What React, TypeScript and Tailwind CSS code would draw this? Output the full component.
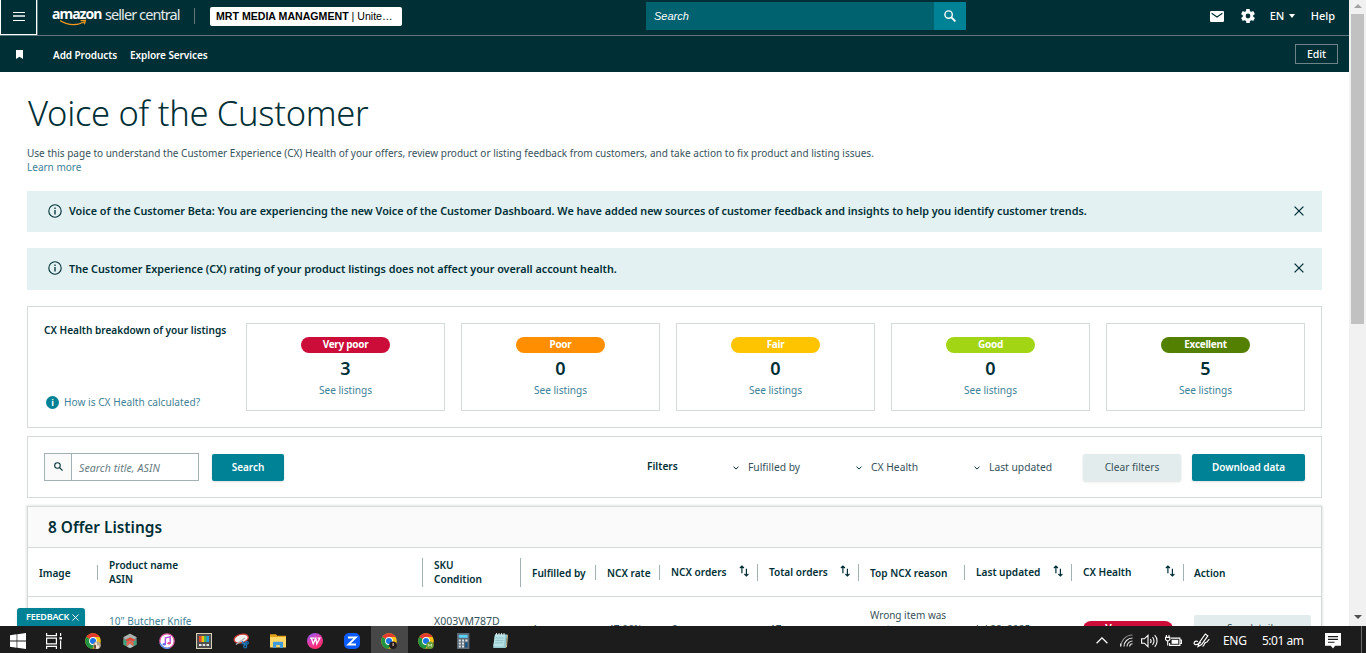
import type { ReactNode } from "react";
import clsx from "clsx";

const HEALTH = [
  { label: "Very poor", count: 3, color: "bg-[#cc0c39]" },
  { label: "Poor", count: 0, color: "bg-[#ff8f00]" },
  { label: "Fair", count: 0, color: "bg-[#ffc400]" },
  { label: "Good", count: 0, color: "bg-[#a2d614]" },
  { label: "Excellent", count: 5, color: "bg-[#538000]" },
];

function Menu() {
  return (
    <div className="flex h-[35px] w-[37px] shrink-0 flex-col items-center gap-[2px] border border-t-0 border-white pt-[12px]">
      <span className="h-px w-3 bg-white" />
      <span className="h-[2px] w-3 bg-[#b9c6c8]" />
      <span className="mt-px h-px w-3 bg-white" />
    </div>
  );
}

function SearchIcon({ className, thick = 1.9 }: { className?: string; thick?: number }) {
  return (
    <svg viewBox="0 0 12 12" className={className} fill="none" stroke="currentColor">
      <circle cx="4.6" cy="4.6" r="3.7" strokeWidth="1.4" />
      <path d="M7.4 7.4 11.4 11.4" strokeWidth={thick} />
    </svg>
  );
}

function Close({ className }: { className?: string }) {
  return (
    <svg viewBox="0 0 10 10" className={className} fill="none" stroke="currentColor" strokeWidth="1.3">
      <path d="M.6.6 9.4 9.4M9.4.6.6 9.4" />
    </svg>
  );
}

function SortIcon() {
  return (
    <svg viewBox="0 0 10 12" className="mb-[2px] h-3 w-[10px] shrink-0 text-[#002f36]" fill="none" stroke="currentColor" strokeWidth="1.2">
      <path d="M2.9 8.3V1M.9 3 2.9 1 4.9 3M7.4 3.7V11M5.4 9 7.4 11 9.4 9" />
    </svg>
  );
}

function Header() {
  return (
    <header className="h-[72px] shrink-0 bg-[#002f36] text-white">
      <div className="flex h-9 border-b border-[#5c777c]">
        <Menu />
        <div className="h-[35px] w-px bg-[#5c777c]" />
        <div className="relative ml-[14px] flex h-[28px] w-[130px] items-center whitespace-nowrap leading-none">
          <span className="w-[53px] text-[14px] font-bold tracking-[-0.95px]">amazon</span>
          <span className="text-[14.5px] tracking-[-0.92px] text-[#e4eaeb]">seller central</span>
          <svg viewBox="0 0 28 8" className="absolute left-[8px] top-[19px] h-2 w-7" fill="none" stroke="#f79a1c" strokeWidth="1.3">
            <path d="M0 1.6Q12 9 24 3M20.6 1.6 25.4 1.4 24.3 5.2" />
          </svg>
        </div>
        <div className="ml-[12px] mt-2 h-4 w-px bg-[#5c777c]" />
        <div className="ml-[15px] mt-[7px] h-[19px] w-[192px] whitespace-nowrap rounded-[2px] bg-white pl-[6px] font-['Liberation_Sans',sans-serif] text-[10.6px] leading-[19px] text-black">
          <b>MRT MEDIA MANAGMENT</b> | Unite…
        </div>
        <div className="ml-[244px] mt-[2px] flex h-7 w-[320px]">
          <div className="flex-1 bg-[#00616f] pl-2 font-['Liberation_Sans',sans-serif] text-[11px] italic leading-7">Search</div>
          <div className="flex w-8 items-center justify-center bg-[#008296]">
            <SearchIcon className="h-3 w-3" />
          </div>
        </div>
        <div className="ml-auto flex h-8 items-center pr-[14px] text-[11px] font-medium">
          <svg viewBox="0 0 14 11" className="h-[11px] w-[14px]">
            <rect width="14" height="11" rx="1.2" fill="#fff" />
            <path d="M1.6 2.2 7 6 12.4 2.2" fill="none" stroke="#002f36" strokeWidth="1.2" />
          </svg>
          <svg viewBox="2 2 20 20" className="ml-[17px] h-[14px] w-[14px]" fill="#fff">
            <path d="M19.4 13c.04-.3.06-.65.06-1s-.02-.7-.07-1l2.1-1.64a.5.5 0 0 0 .12-.64l-2-3.46a.5.5 0 0 0-.6-.22l-2.5 1a7.3 7.3 0 0 0-1.7-.98l-.37-2.65a.5.5 0 0 0-.5-.41h-4a.5.5 0 0 0-.5.41l-.37 2.65a7.3 7.3 0 0 0-1.7.98l-2.48-1a.5.5 0 0 0-.6.22l-2 3.46a.5.5 0 0 0 .12.64L4.6 11a8 8 0 0 0 0 2l-2.1 1.64a.5.5 0 0 0-.13.64l2 3.46c.13.22.38.3.6.22l2.5-1c.52.4 1.08.73 1.7.98l.37 2.65c.04.24.25.41.5.41h4c.25 0 .46-.17.5-.41l.37-2.65a7.3 7.3 0 0 0 1.7-.98l2.49 1c.22.08.47 0 .6-.22l2-3.46a.5.5 0 0 0-.12-.64ZM12 15.4a3.4 3.4 0 1 1 0-6.8 3.4 3.4 0 0 1 0 6.8Z" />
          </svg>
          <span className="ml-[15px] w-[19px]">EN</span>
          <span className="border-x-[3.5px] border-t-[4px] border-x-transparent border-t-white" />
          <span className="ml-[16px]">Help</span>
        </div>
      </div>
      <div className="flex h-9 items-center text-[10px] font-semibold tracking-[-0.08px]">
        <svg viewBox="0 0 7 9" className="ml-4 h-[9px] w-[7px]" fill="#fff">
          <path d="M0 0H7V9L3.5 6.8 0 9Z" />
        </svg>
        <span className="ml-[30px] w-[77px] whitespace-nowrap pt-[2px]">Add Products</span>
        <span className="whitespace-nowrap pt-[2px]">Explore Services</span>
        <div className="ml-auto mr-[11px] flex h-5 w-[43px] items-center justify-center border border-[#6b8589] pt-px text-[10.5px] font-medium">Edit</div>
      </div>
    </header>
  );
}

function Alert({ className, children }: { className?: string; children: ReactNode }) {
  return (
    <div className={clsx("flex items-center bg-[#e3f1f2] pl-[21px] pr-[18px] text-[#002f36]", className)}>
      <svg viewBox="0 0 14 14" className="mb-[2px] h-[14px] w-[14px]" fill="none" stroke="currentColor">
        <circle cx="7" cy="7" r="6.2" strokeWidth="1.1" />
        <path d="M7 6V10.4M7 3.6V5" strokeWidth="1.3" />
      </svg>
      <p className="mb-px ml-[7px] flex-1 whitespace-nowrap text-[10.8px] font-semibold leading-4 tracking-[-0.015px]">{children}</p>
      <Close className="mb-[2px] h-[10px] w-[10px]" />
    </div>
  );
}

function Breakdown() {
  return (
    <section className="mt-4 flex h-[122px] border border-[#d5dbdb] pl-4 pt-4">
      <div className="-mt-px flex h-[88px] w-[202px] flex-col justify-between whitespace-nowrap">
        <h2 className="text-[10.1px] font-semibold leading-4 text-[#002f36]">CX Health breakdown of your listings</h2>
        <div className="flex items-center pl-[2px] text-[10.1px] leading-4 text-[#3f8297]">
          <span className="flex h-[13px] w-[13px] items-center justify-center rounded-full bg-[#008296] text-[9px] font-bold leading-none text-white">i</span>
          <span className="ml-[5px] tracking-[0.03px]">How is CX Health calculated?</span>
        </div>
      </div>
      <div className="flex gap-4">
        {HEALTH.map((h) => (
          <div key={h.label} className="flex h-[88px] w-[199px] flex-col items-center border border-[#d5dbdb] pt-[13px]">
            <span className={clsx("h-4 w-[89px] rounded-full text-center text-[10px] font-bold leading-[15px] tracking-[-0.3px] text-white", h.color)}>{h.label}</span>
            <span className="mt-[3px] text-[18px] font-semibold leading-[24px] text-[#002f36]">{h.count}</span>
            <span className="mt-[2px] text-[10.1px] leading-4 text-[#3f8297]">See listings</span>
          </div>
        ))}
      </div>
    </section>
  );
}

function Filter({ className, children }: { className: string; children: ReactNode }) {
  return (
    <div className={clsx("flex items-center whitespace-nowrap pt-[2px] text-[10.3px] text-[#37525a]", className)}>
      <svg viewBox="0 0 6 4" className="mr-[9px] h-1 w-[6px]" fill="none" stroke="#002f36">
        <path d="M.5.6 3 3.1 5.5.6" />
      </svg>
      {children}
    </div>
  );
}

function Filters() {
  return (
    <section className="mt-2 flex h-[62px] border border-[#d5dbdb] pl-4">
      <div className="mt-4 flex h-7 w-[155px] border border-[#a2b1b3]">
        <div className="flex w-[27px] justify-center border-r border-[#a2b1b3] bg-[#fafafa] pt-2 text-[#002f36]">
          <SearchIcon className="h-[9px] w-[9px]" thick={1.5} />
        </div>
        <span className="pl-[7px] text-[10.5px] italic leading-[28px] tracking-[0.1px] text-[#687d82]">Search title, ASIN</span>
      </div>
      <button className="ml-[13px] mt-[17px] h-[27px] w-[72px] rounded-[2px] bg-[#008296] text-[10px] font-semibold text-white shadow-sm">Search</button>
      <span className="ml-[363px] mt-[21px] w-[86px] text-[10.2px] font-semibold leading-4 text-[#002f36]">Filters</span>
      <Filter className="w-[123px]">Fulfilled by</Filter>
      <Filter className="w-[118px]">CX Health</Filter>
      <Filter className="w-[109px]">Last updated</Filter>
      <button className="mt-[17px] h-[27px] w-[98px] rounded-[2px] bg-[#e3eced] text-[10.2px] text-[#37525a] shadow-sm">Clear filters</button>
      <button className="ml-[11px] mt-[17px] h-[27px] w-[113px] rounded-[2px] bg-[#008296] text-[10px] font-semibold tracking-[-0.05px] text-white shadow-sm">Download data</button>
    </section>
  );
}

type HeadProps = { width: string; bar?: string; tall?: boolean; sort?: boolean; children: ReactNode };

function Head({ width, bar = "h-[15px]", tall, sort, children }: HeadProps) {
  return (
    <div className={clsx("flex shrink-0 items-center whitespace-nowrap", width)}>
      <div className={clsx("flex-1", sort && "pb-px", !sort && !tall && "pt-px")}>{children}</div>
      {sort && <SortIcon />}
      {bar && <span className={clsx("w-px bg-[#a2b1b3]", bar, sort && "ml-[8px]")} />}
    </div>
  );
}

function Listings() {
  return (
    <section className="mt-2 h-[160px] border border-[#d5dbdb] shadow-[0_0_2px_1px_rgba(0,0,0,0.1)]">
      <h2 className="h-[41px] border-b border-[#d5dbdb] bg-[#fafafa] pl-5 text-[15.4px] font-semibold leading-[41px] text-[#002f36]">8 Offer Listings</h2>
      <div className="flex h-[49px] border-b border-[#d5dbdb] pl-[11px] text-[10.1px] font-semibold leading-[14px] text-[#002f36]">
        <Head width="w-[59px]">Image</Head>
        <Head width="w-[325px] pl-[11px]" bar="h-[29px]" tall>Product name<br />ASIN</Head>
        <Head width="w-[98px] pl-[11px]" bar="h-[29px]" tall>SKU<br />Condition</Head>
        <Head width="w-[75px] pl-[11px]">Fulfilled by</Head>
        <Head width="w-[64px] pl-[11px]">NCX rate</Head>
        <Head width="w-[98px] pl-[11px]" bar="h-[17px]" sort>NCX orders</Head>
        <Head width="w-[101px] pl-[11px]" bar="h-[17px]" sort>Total orders</Head>
        <Head width="w-[106px] pl-[11px]">Top NCX reason</Head>
        <Head width="w-[107px] pl-[11px]" bar="h-[17px]" sort>Last updated</Head>
        <Head width="w-[112px] pl-[11px]" bar="h-[17px]" sort>CX Health</Head>
        <Head width="w-[130px] pl-[10px]" bar="">Action</Head>
      </div>
      <div className="flex h-[68px] items-start overflow-hidden whitespace-nowrap text-[10.1px] leading-[14px] text-[#37525a]">
        <span className="ml-[81px] mt-[17px] w-[325px] text-[#3f8297]">10" Butcher Knife</span>
        <span className="mt-[17px] w-[98px] text-[10.5px]">X003VM787D</span>
        <span className="mt-[25px] w-[76px]">Amazon</span>
        <span className="mt-[25px] w-[64px]">47.06%</span>
        <span className="mt-[25px] w-[98px]">8</span>
        <span className="mt-[25px] w-[100px]">17</span>
        <span className="mt-[11px] w-[106px] text-[10px]">Wrong item was<br />sent</span>
        <span className="mt-[25px] w-[107px]">Jul 22, 2025</span>
        <span className="mt-[24px] h-4 w-[90px] rounded-full bg-[#cc0c39] text-center text-[10px] font-bold leading-[15px] tracking-[-0.3px] text-white">Very poor</span>
        <span className="ml-[21px] mt-[18px] h-[27px] w-[117px] rounded-[2px] bg-[#e3eced] text-center leading-[27px]">See details</span>
      </div>
    </section>
  );
}

function Scrollbar() {
  return (
    <div className="flex w-[17px] shrink-0 flex-col items-center bg-[#f1f1f1]">
      <span className="mt-1 border-x-[4px] border-b-[4px] border-x-transparent border-b-[#a3a3a3]" />
      <div className="mt-[6px] h-[310px] w-[13px] bg-[#c1c1c1]" />
      <span className="mb-[7px] mt-auto border-x-[4px] border-t-[4px] border-x-transparent border-t-[#505050]" />
    </div>
  );
}

function Icon({ children }: { children: ReactNode }) {
  return (
    <svg viewBox="0 0 16 16" className="h-4 w-4 shrink-0">
      {children}
    </svg>
  );
}

function Chrome({ children }: { children: ReactNode }) {
  return (
    <Icon>
      <circle cx="8" cy="8" r="7.8" fill="#fbc116" />
      <path d="M8 8 1.3 4A7.8 7.8 0 0 1 14.7 4H8Z" fill="#e33b2e" />
      <path d="M1.3 4A7.8 7.8 0 0 0 7.3 15.8L11 10 8 8Z" fill="#229342" />
      <circle cx="8" cy="8" r="3.9" fill="#fff" />
      <circle cx="8" cy="8" r="3" fill="#1a73e8" />
      {children}
    </Icon>
  );
}

const APPS: { name: string; active?: boolean; icon: ReactNode }[] = [
  {
    name: "chrome",
    icon: (
      <Chrome>
        <circle cx="12" cy="12.2" r="3.8" fill="#b9a692" />
        <path d="M10 9.5h2v3h2.4l-1 3.3h-2.8Z" fill="#f3e4d4" />
        <path d="M9 12h2v3.5H9Z" fill="#6b4c3a" />
      </Chrome>
    ),
  },
  {
    name: "hexagon",
    icon: (
      <Icon>
        <path d="M8 .8 14.6 4.3V11.7L8 15.2 1.4 11.7V4.3Z" fill="#7e8c87" />
        <path d="M8 .8 14.6 4.3 12 6.2 8 4.6 4 6.5 1.4 4.3Z" fill="#a9b4b0" />
        <path d="M4 6.4 8.2 4.4 12.8 6.5 11.8 8.6 8 7 4.6 8.8Z" fill="#e5442f" />
        <path d="M1.5 6.5 4.4 8V13L1.5 11.6Z" fill="#36a878" />
        <path d="M4.6 9 8 7.6 11.4 9.2V13.2L8 10.4 4.6 13.2Z" fill="#e96350" />
        <path d="M4.8 13.4 8 10.8 11.2 13.4 8 15.1Z" fill="#b8c4c0" />
        <path d="M11.8 8.5 14.4 7.3V11.6L11.8 13Z" fill="#3aa57a" />
      </Icon>
    ),
  },
  {
    name: "music",
    icon: (
      <Icon>
        <circle cx="8" cy="8" r="7.2" fill="#fff" stroke="#e0559f" strokeWidth="1.3" />
        <path d="M1 10A7.2 7.2 0 0 0 11 14.6" fill="none" stroke="#4d9df5" strokeWidth="1.3" />
        <path d="M6.4 11.2V4.9L11.2 3.8V10" fill="none" stroke="#b44de0" strokeWidth="1.4" />
        <ellipse cx="5.3" cy="11.3" rx="1.7" ry="1.3" fill="#6b6cf0" />
        <ellipse cx="10.1" cy="10.3" rx="1.7" ry="1.3" fill="#e8478d" />
      </Icon>
    ),
  },
  {
    name: "powertoys",
    icon: (
      <Icon>
        <rect x=".5" y=".5" width="15" height="15" fill="#4e4e4e" stroke="#d8cfb4" />
        <rect x="3" y="3" width="2.5" height="6" fill="#e8452c" />
        <rect x="5.5" y="3" width="2.5" height="6" fill="#fdbb16" />
        <rect x="8" y="3" width="2.5" height="6" fill="#54b948" />
        <rect x="10.5" y="3" width="2.5" height="6" fill="#21a3e8" />
        <path d="M3 11h2.5v2H3Zm3.7 0h2.5v2H6.7Zm3.8 0H13v2h-2.5Z" fill="#e6e6e6" />
      </Icon>
    ),
  },
  {
    name: "snipping",
    icon: (
      <Icon>
        <ellipse cx="8.2" cy="5.6" rx="7.2" ry="4.2" transform="rotate(-15 8 5.6)" fill="#f1eeee" stroke="#d33a34" strokeWidth="1.2" />
        <path d="M3 11.5 12 5" stroke="#b5b5b5" strokeWidth="1.4" />
        <path d="M9 8.2 12 12M13.6 9.7 8.5 11" stroke="#1d7fc8" strokeWidth="1.2" />
        <circle cx="12.2" cy="13.4" r="1.5" fill="none" stroke="#1d7fc8" strokeWidth="1.1" />
        <circle cx="14" cy="9.8" r="1.3" fill="none" stroke="#1d7fc8" strokeWidth="1.1" />
      </Icon>
    ),
  },
  {
    name: "explorer",
    icon: (
      <Icon>
        <path d="M0 1.2h6l1.2 1.6H16v3H0Z" fill="#e5a21c" />
        <rect y="4" width="16" height="10.5" fill="#ffd766" />
        <path d="M3 15V8.8h10V15h-3.2v-3H6.2v3Z" fill="#3f9bdc" />
      </Icon>
    ),
  },
  {
    name: "wps",
    icon: (
      <Icon>
        <defs>
          <linearGradient id="wps" x1="0" y1="0" x2=".6" y2="1">
            <stop stopColor="#7c5cf5" />
            <stop offset=".5" stopColor="#e23fb0" />
            <stop offset="1" stopColor="#fb2b63" />
          </linearGradient>
        </defs>
        <circle cx="8" cy="8" r="8" fill="url(#wps)" />
        <path d="M3 5.2H7.8M4.4 5.2 6.2 10.8 8.8 5.4 9.8 10.8 12.8 5.2H10.6" fill="none" stroke="#fff" strokeWidth="1.3" />
      </Icon>
    ),
  },
  {
    name: "zoom",
    icon: (
      <Icon>
        <rect width="16" height="16" rx="5" fill="#0b5cff" />
        <path d="M4 4.6H11.6L4.6 11.4H12" fill="none" stroke="#fff" strokeWidth="2" />
      </Icon>
    ),
  },
  {
    name: "chrome-active",
    active: true,
    icon: (
      <Chrome>
        <circle cx="12" cy="12.2" r="3.8" fill="#221d1f" />
        <path d="M11.4 10h1.6v3h-1.6Z" fill="#b98d7c" />
      </Chrome>
    ),
  },
  {
    name: "chrome-profile",
    icon: (
      <Chrome>
        <circle cx="12" cy="12.2" r="3.8" fill="#689f38" />
        <path d="M10.4 13.6V11l1.6 1.8L13.6 11v2.6" fill="none" stroke="#d8ecc6" strokeWidth=".8" />
      </Chrome>
    ),
  },
  {
    name: "calculator",
    icon: (
      <Icon>
        <rect x="2" width="12.4" height="16" rx=".6" fill="#5d6a75" />
        <rect x="3.8" y="1.8" width="8.8" height="3" fill="#5bd0f5" />
        <path d="M3.8 6.5h2v2h-2Zm3.2 0h2v2H7Zm3.3 0h2.2v2h-2.2Zm-6.5 3h2v2h-2Zm3.2 0h2v2H7Zm-3.2 3h2v2h-2Zm3.2 0h2v2H7Z" fill="#dce3e8" />
        <path d="M10.3 9.5h2.2v5h-2.2Z" fill="#12508a" />
      </Icon>
    ),
  },
  {
    name: "notepad",
    icon: (
      <Icon>
        <path d="M3 1.5H15.2L13.8 15H1.2Z" fill="#93c9cf" />
        <path d="M3 1.5H13.4L11.6 13.4H1.2Z" fill="#b7e3e6" />
        <path d="M3.6 5h8.2M3.3 7.4h8.2M3 9.8h8.2" stroke="#7fb4bd" strokeWidth=".7" />
        <path d="M4.5 0V2.4M7 0V2.4M9.5 0V2.4M12 0V2.4" stroke="#d8e2e4" />
        <path d="M15.2 1.5 13.8 15l1.2-1.6L16 2Z" fill="#d2ba8c" />
      </Icon>
    ),
  },
];

function Taskbar() {
  return (
    <footer className="flex h-[27px] shrink-0 items-center bg-[#1c1c1c] pt-[2px] text-white">
      <div className="flex w-9 justify-center">
        <svg viewBox="0 0 16 16" className="h-4 w-4" fill="#fff">
          <path d="M0 2.2 6.6 1.3V7.6H0ZM7.3 1.2 16 0V7.6H7.3ZM0 8.4H6.6V14.7L0 13.8ZM7.3 8.4H16V16L7.3 14.8Z" />
        </svg>
      </div>
      <div className="flex w-[39px] justify-center pr-[3px]">
        <svg viewBox="0 0 16 16" className="h-4 w-4" fill="none" stroke="#fff" strokeWidth="1.2">
          <path d="M.6 0V2.6H10.4V0M.6 16V13.4H10.4V16M.6 5.2H10.4V10.8H.6ZM14.6 0V3M14.6 7.4V16" />
          <path d="M13.4 4.2H16V6.4H13.4Z" fill="#fff" stroke="none" />
        </svg>
      </div>
      {APPS.map((app) => (
        <div key={app.name} className={clsx("-mt-[2px] flex h-[27px] w-[37px] items-center justify-center pr-px pt-[3px]", app.active && "bg-[#474747]")}>
          {app.icon}
        </div>
      ))}
      <div className="ml-auto flex h-full items-center whitespace-nowrap text-[12px]">
        <svg viewBox="0 0 12 7" className="h-[7px] w-3" fill="none" stroke="#fff" strokeWidth="1.3">
          <path d="M.6 6.3 6 .9 11.4 6.3" />
        </svg>
        <svg viewBox="0 0 13 13" className="ml-[12px] h-[13px] w-[13px]" fill="none" stroke="#e4e4e4" strokeWidth="1.1">
          <path d="M1 12.5A11.5 11.5 0 0 1 12.5 1" stroke="#8d8d8d" />
          <path d="M4 12.5A8.5 8.5 0 0 1 12.5 4M7 12.5A5.5 5.5 0 0 1 12.5 7M9.7 12.5A2.8 2.8 0 0 1 12.5 9.7" />
          <path d="M.6 9.5V12.6" />
        </svg>
        <svg viewBox="0 0 17 14" className="ml-2 h-[14px] w-[17px]" fill="none" stroke="#fff" strokeWidth="1.1">
          <path d="M.6 4.8H3.4L7 1.4V12.6L3.4 9.2H.6ZM9.3 5A3 3 0 0 1 9.3 9M11.5 3.2A5.5 5.5 0 0 1 11.5 10.8" />
          <path d="M13.7 1.2A8.3 8.3 0 0 1 13.7 12.8" />
        </svg>
        <svg viewBox="0 0 17 12" className="ml-[7px] h-3 w-[17px]" fill="none" stroke="#fff" strokeWidth="1.1">
          <path d="M6 3.1H14.9V10.4H4.6V8M15 5H16.4V8.5H15M1.4 0V2M4 0V2M.5 2.4H4.9V4.5L3.6 5.8H1.8L.5 4.5ZM2.7 6V10.5" />
          <path d="M6.6 4.8H13.3V8.8H6.6Z" fill="#fff" stroke="none" />
        </svg>
        <svg viewBox="0 0 17 15" className="ml-[11px] h-[15px] w-[17px]" fill="none" stroke="#fff" strokeWidth="1.2">
          <path d="M5 8.5C1.5 7 0 10.5 2 11.5S6 10 8 9.5M5 13.6 6 10 12.3 1 14.8 2.8 8.6 11.6ZM9.5 13C12 13.5 10.4 9.4 13 9.4S14.5 6 16.4 6.6" />
        </svg>
        <span className="ml-[13px] w-[39px] tracking-[-0.3px]">ENG</span>
        <span className="w-[63px] tracking-[-0.5px]">5:01 am</span>
        <svg viewBox="0 0 16 16" className="h-4 w-4">
          <path d="M0 0H16V12.8H10.2L8 15.6 5.8 12.8H0Z" fill="#fff" />
          <path d="M3 3.6H13M3 6.4H13M3 9.2H9.5" stroke="#1c1c1c" strokeWidth="1.1" />
        </svg>
        <span className="-mt-[2px] ml-[20px] mr-1 h-[27px] w-px bg-[#6a6a6a]" />
      </div>
    </footer>
  );
}

export default function App() {
  return (
    <div className="flex h-[653px] w-[1366px] flex-col overflow-hidden bg-white font-['Noto_Sans',sans-serif]">
      <div className="relative flex h-[626px] shrink-0 overflow-hidden">
        <div className="flex w-[1349px] shrink-0 flex-col">
          <Header />
          <main className="h-[554px] overflow-hidden px-[27px]">
            <h1 className="ml-px mt-[18px] text-[34.5px] font-light leading-[46px] tracking-[-0.28px] text-[#002f36]">Voice of the Customer</h1>
            <p className="mt-[10px] whitespace-nowrap text-[10px] leading-[14px] tracking-[0.01px] text-[#37525a]">
              Use this page to understand the Customer Experience (CX) Health of your offers, review product or listing feedback from customers, and take action to fix product and listing issues.
            </p>
            <p className="text-[10px] leading-[14px] text-[#3f8297]">Learn more</p>
            <Alert className="mt-[17px] h-[41px]">
              Voice of the Customer Beta: You are experiencing the new Voice of the Customer Dashboard. We have added new sources of customer feedback and insights to help you identify customer trends.
            </Alert>
            <Alert className="mt-4 h-[42px]">The Customer Experience (CX) rating of your product listings does not affect your overall account health.</Alert>
            <Breakdown />
            <Filters />
            <Listings />
          </main>
        </div>
        <Scrollbar />
        <div className="absolute bottom-0 left-[17px] flex h-[18px] w-[68px] items-center rounded-t-[3px] bg-[#008296] pl-[9px] text-[9px] font-semibold text-white shadow">
          <span className="w-[46px] tracking-[-0.2px]">FEEDBACK</span>
          <Close className="h-[7px] w-[7px]" />
        </div>
      </div>
      <Taskbar />
    </div>
  );
}
